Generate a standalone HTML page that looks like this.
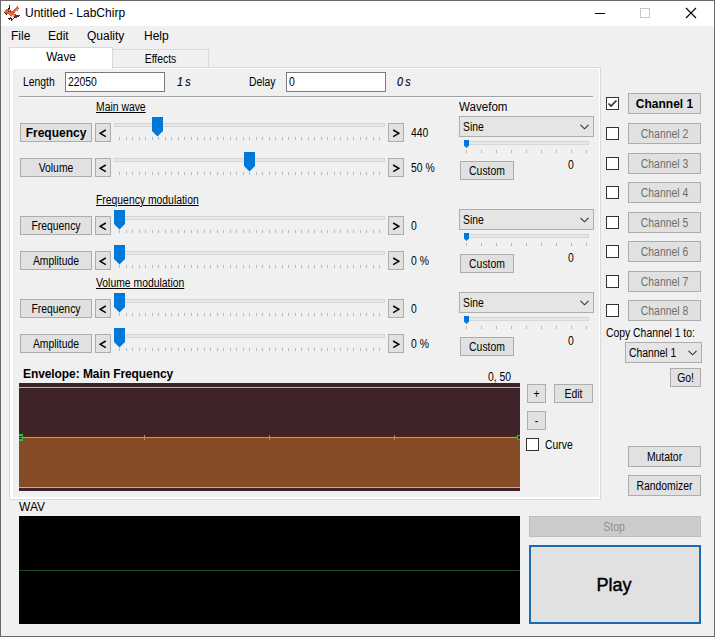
<!DOCTYPE html><html><head><meta charset="utf-8"><style>
*{margin:0;padding:0}
html,body{width:715px;height:637px;overflow:hidden;background:#f0f0f0}
body{position:relative;font-family:"Liberation Sans",sans-serif}
div{position:absolute}
.t{white-space:pre}
</style></head><body>
<div style="left:0px;top:0px;width:715px;height:637px;border:1px solid #6a6a6a;box-sizing:border-box;"></div>
<div style="left:1px;top:1px;width:713px;height:25px;background:#fff;"></div>
<svg style="position:absolute;left:2px;top:3px" width="20" height="20" shape-rendering="crispEdges"><rect x="7" y="2" width="1" height="1" fill="#4a2016"/><rect x="7" y="3" width="1" height="1" fill="#4a2016"/><rect x="15" y="3" width="1" height="1" fill="#b8442a"/><rect x="7" y="4" width="1" height="1" fill="#4a2016"/><rect x="14" y="4" width="1" height="1" fill="#e0653f"/><rect x="15" y="4" width="1" height="1" fill="#e0653f"/><rect x="16" y="4" width="1" height="1" fill="#f4b896"/><rect x="6" y="5" width="1" height="1" fill="#4a2016"/><rect x="7" y="5" width="1" height="1" fill="#4a2016"/><rect x="13" y="5" width="1" height="1" fill="#e0653f"/><rect x="14" y="5" width="1" height="1" fill="#e0653f"/><rect x="15" y="5" width="1" height="1" fill="#e0653f"/><rect x="16" y="5" width="1" height="1" fill="#b8442a"/><rect x="6" y="6" width="1" height="1" fill="#4a2016"/><rect x="4" y="6" width="1" height="1" fill="#e0653f"/><rect x="5" y="6" width="1" height="1" fill="#e0653f"/><rect x="7" y="6" width="1" height="1" fill="#e0653f"/><rect x="12" y="6" width="1" height="1" fill="#e0653f"/><rect x="13" y="6" width="1" height="1" fill="#e0653f"/><rect x="14" y="6" width="1" height="1" fill="#e0653f"/><rect x="15" y="6" width="1" height="1" fill="#f4b896"/><rect x="3" y="7" width="1" height="1" fill="#e0653f"/><rect x="4" y="7" width="1" height="1" fill="#e0653f"/><rect x="5" y="7" width="1" height="1" fill="#e0653f"/><rect x="6" y="7" width="1" height="1" fill="#e0653f"/><rect x="7" y="7" width="1" height="1" fill="#e0653f"/><rect x="8" y="7" width="1" height="1" fill="#e0653f"/><rect x="11" y="7" width="1" height="1" fill="#e0653f"/><rect x="12" y="7" width="1" height="1" fill="#e0653f"/><rect x="13" y="7" width="1" height="1" fill="#e0653f"/><rect x="14" y="7" width="1" height="1" fill="#f4b896"/><rect x="15" y="7" width="1" height="1" fill="#b8442a"/><rect x="2" y="8" width="1" height="1" fill="#f4b896"/><rect x="3" y="8" width="1" height="1" fill="#e0653f"/><rect x="4" y="8" width="1" height="1" fill="#e0653f"/><rect x="5" y="8" width="1" height="1" fill="#e0653f"/><rect x="6" y="8" width="1" height="1" fill="#4a2016"/><rect x="7" y="8" width="1" height="1" fill="#e0653f"/><rect x="8" y="8" width="1" height="1" fill="#4a2016"/><rect x="9" y="8" width="1" height="1" fill="#e0653f"/><rect x="10" y="8" width="1" height="1" fill="#e0653f"/><rect x="11" y="8" width="1" height="1" fill="#e0653f"/><rect x="12" y="8" width="1" height="1" fill="#e0653f"/><rect x="13" y="8" width="1" height="1" fill="#f4b896"/><rect x="2" y="9" width="1" height="1" fill="#4a2016"/><rect x="3" y="9" width="1" height="1" fill="#e0653f"/><rect x="4" y="9" width="1" height="1" fill="#e0653f"/><rect x="5" y="9" width="1" height="1" fill="#e0653f"/><rect x="6" y="9" width="1" height="1" fill="#e0653f"/><rect x="7" y="9" width="1" height="1" fill="#e0653f"/><rect x="8" y="9" width="1" height="1" fill="#e0653f"/><rect x="9" y="9" width="1" height="1" fill="#e0653f"/><rect x="10" y="9" width="1" height="1" fill="#e0653f"/><rect x="11" y="9" width="1" height="1" fill="#e0653f"/><rect x="12" y="9" width="1" height="1" fill="#e0653f"/><rect x="3" y="10" width="1" height="1" fill="#4a2016"/><rect x="4" y="10" width="1" height="1" fill="#4a2016"/><rect x="5" y="10" width="1" height="1" fill="#e0653f"/><rect x="6" y="10" width="1" height="1" fill="#e0653f"/><rect x="7" y="10" width="1" height="1" fill="#e0653f"/><rect x="8" y="10" width="1" height="1" fill="#e0653f"/><rect x="9" y="10" width="1" height="1" fill="#e0653f"/><rect x="10" y="10" width="1" height="1" fill="#e0653f"/><rect x="11" y="10" width="1" height="1" fill="#e0653f"/><rect x="4" y="11" width="1" height="1" fill="#4a2016"/><rect x="7" y="11" width="1" height="1" fill="#e0653f"/><rect x="8" y="11" width="1" height="1" fill="#e0653f"/><rect x="9" y="11" width="1" height="1" fill="#e0653f"/><rect x="10" y="11" width="1" height="1" fill="#e0653f"/><rect x="11" y="11" width="1" height="1" fill="#e0653f"/><rect x="12" y="11" width="1" height="1" fill="#e0653f"/><rect x="13" y="11" width="1" height="1" fill="#b8442a"/><rect x="8" y="12" width="1" height="1" fill="#e0653f"/><rect x="9" y="12" width="1" height="1" fill="#e0653f"/><rect x="10" y="12" width="1" height="1" fill="#f4b896"/><rect x="11" y="12" width="1" height="1" fill="#f4b896"/><rect x="12" y="12" width="1" height="1" fill="#e0653f"/><rect x="13" y="12" width="1" height="1" fill="#6a3024"/><rect x="14" y="12" width="1" height="1" fill="#6a3024"/><rect x="15" y="12" width="1" height="1" fill="#6a3024"/><rect x="16" y="12" width="1" height="1" fill="#6a3024"/><rect x="17" y="12" width="1" height="1" fill="#6a3024"/><rect x="9" y="13" width="1" height="1" fill="#f4b896"/><rect x="10" y="13" width="1" height="1" fill="#f4b896"/><rect x="11" y="13" width="1" height="1" fill="#f4b896"/><rect x="12" y="13" width="1" height="1" fill="#6a3024"/><rect x="13" y="13" width="1" height="1" fill="#6a3024"/><rect x="14" y="13" width="1" height="1" fill="#6a3024"/><rect x="15" y="13" width="1" height="1" fill="#6a3024"/><rect x="16" y="13" width="1" height="1" fill="#4a2016"/><rect x="8" y="14" width="1" height="1" fill="#4a2016"/><rect x="12" y="14" width="1" height="1" fill="#4a2016"/><rect x="13" y="14" width="1" height="1" fill="#6a3024"/><rect x="14" y="14" width="1" height="1" fill="#6a3024"/><rect x="6" y="15" width="1" height="1" fill="#4a2016"/><rect x="7" y="15" width="1" height="1" fill="#4a2016"/><rect x="8" y="15" width="1" height="1" fill="#4a2016"/><rect x="9" y="15" width="1" height="1" fill="#4a2016"/><rect x="11" y="15" width="1" height="1" fill="#4a2016"/><rect x="7" y="16" width="1" height="1" fill="#4a2016"/><rect x="9" y="16" width="1" height="1" fill="#4a2016"/><rect x="10" y="16" width="1" height="1" fill="#4a2016"/><rect x="9" y="17" width="1" height="1" fill="#4a2016"/></svg>
<div class="t" style="left:25px;top:6.84px;font-size:12px;line-height:12px;font-weight:400;color:#000;">Untitled - LabChirp</div>
<div style="left:595px;top:13px;width:10px;height:1px;background:#000;"></div>
<div style="left:640px;top:8px;width:10px;height:10px;border:1px solid #c8c8c8;box-sizing:border-box;"></div>
<svg style="position:absolute;left:685px;top:7px" width="12" height="12" viewBox="0 0 12 12">
<path d="M1 1 L11 11 M11 1 L1 11" stroke="#000" stroke-width="1.1"/></svg>
<div class="t" style="left:11px;top:29.84px;font-size:12px;line-height:12px;font-weight:400;color:#000;">File</div>
<div class="t" style="left:48px;top:29.84px;font-size:12px;line-height:12px;font-weight:400;color:#000;">Edit</div>
<div class="t" style="left:87px;top:29.84px;font-size:12px;line-height:12px;font-weight:400;color:#000;">Quality</div>
<div class="t" style="left:144px;top:29.84px;font-size:12px;line-height:12px;font-weight:400;color:#000;">Help</div>
<div style="left:9px;top:67px;width:592px;height:433px;border:1px solid #d9d9d9;background:#fff;box-sizing:border-box;"></div>
<div style="left:13px;top:69px;width:586px;height:428px;background:#f0f0f0;"></div>
<div style="left:112px;top:49px;width:97px;height:19px;border:1px solid #d9d9d9;background:#f0f0f0;box-sizing:border-box;"></div>
<div style="left:9px;top:47px;width:104px;height:22px;border:1px solid #d9d9d9;border-bottom:none;background:#fff;box-sizing:border-box;"></div>
<div style="left:10px;top:67px;width:102px;height:2px;background:#fff;"></div>
<div class="t" style="left:9px;width:104px;text-align:center;top:50.84px;font-size:12px;line-height:12px;font-weight:400;color:#000;transform:scaleX(0.98);transform-origin:50% 0;">Wave</div>
<div class="t" style="left:112px;width:97px;text-align:center;top:52.84px;font-size:12px;line-height:12px;font-weight:400;color:#000;transform:scaleX(0.865);transform-origin:50% 0;">Effects</div>
<div class="t" style="left:23px;top:75.84px;font-size:12px;line-height:12px;font-weight:400;color:#000;transform:scaleX(0.865);transform-origin:0 0;">Length</div>
<div style="left:65px;top:72px;width:100px;height:20px;border:1px solid #7a7a7a;background:#fff;box-sizing:border-box;"></div>
<div class="t" style="left:68px;top:75.84px;font-size:12px;line-height:12px;font-weight:400;color:#000;transform:scaleX(0.865);transform-origin:0 0;">22050</div>
<div class="t" style="left:176.5px;top:75.84px;font-size:12px;line-height:12px;font-weight:400;color:#000;transform:scaleX(0.9);transform-origin:0 0;font-style:italic;letter-spacing:-0.4px;-webkit-text-stroke:0.15px #000;">1 s</div>
<div class="t" style="left:249px;top:75.84px;font-size:12px;line-height:12px;font-weight:400;color:#000;transform:scaleX(0.865);transform-origin:0 0;">Delay</div>
<div style="left:286px;top:72px;width:100px;height:20px;border:1px solid #7a7a7a;background:#fff;box-sizing:border-box;"></div>
<div class="t" style="left:289px;top:75.84px;font-size:12px;line-height:12px;font-weight:400;color:#000;transform:scaleX(0.865);transform-origin:0 0;">0</div>
<div class="t" style="left:396.5px;top:75.84px;font-size:12px;line-height:12px;font-weight:400;color:#000;transform:scaleX(0.9);transform-origin:0 0;font-style:italic;letter-spacing:-0.4px;-webkit-text-stroke:0.15px #000;">0 s</div>
<div style="left:19px;top:96px;width:574px;height:1px;background:#a0a0a0;"></div>
<div style="left:19px;top:97px;width:574px;height:1px;background:#fff;"></div>
<div class="t" style="left:96px;top:100.84px;font-size:12px;line-height:12px;font-weight:400;color:#000;transform:scaleX(0.865);transform-origin:0 0;text-decoration:underline;">Main wave</div>
<div class="t" style="left:459px;top:100.84px;font-size:12px;line-height:12px;font-weight:400;color:#000;transform:scaleX(0.965);transform-origin:0 0;">Wavefom</div>
<div style="left:20px;top:123px;width:72px;height:19px;background:#e1e1e1;border:1px solid #adadad;box-sizing:border-box;"></div>
<div class="t" style="left:20px;width:72px;text-align:center;top:126.84px;font-size:12px;line-height:12px;font-weight:700;color:#000;">Frequency</div>
<div style="left:95px;top:123px;width:16px;height:19px;background:#e1e1e1;border:1px solid #adadad;box-sizing:border-box;"></div>
<div class="t" style="left:95px;width:16px;text-align:center;top:126.84px;font-size:12px;line-height:12px;font-weight:400;color:#000;transform:scaleX(0.865);transform-origin:50% 0;"></div>
<svg style="position:absolute;left:95px;top:123px" width="16" height="19" viewBox="0 0 16 19"><path d="M10.8 7 L5.2 10.3 L10.8 13.6" stroke="#000" stroke-width="1.5" fill="none"/></svg>
<div style="left:114px;top:123px;width:271px;height:4px;border:1px solid #d6d6d6;background:#e7e7e7;box-sizing:border-box;"></div>
<svg style="position:absolute;left:114px;top:137px" width="271" height="3"><g fill="#b8b8b8"><rect x="5" y="0" width="1" height="3"/><rect x="12" y="0" width="1" height="3"/><rect x="18" y="0" width="1" height="3"/><rect x="25" y="0" width="1" height="3"/><rect x="31" y="0" width="1" height="3"/><rect x="38" y="0" width="1" height="3"/><rect x="44" y="0" width="1" height="3"/><rect x="51" y="0" width="1" height="3"/><rect x="57" y="0" width="1" height="3"/><rect x="64" y="0" width="1" height="3"/><rect x="70" y="0" width="1" height="3"/><rect x="77" y="0" width="1" height="3"/><rect x="83" y="0" width="1" height="3"/><rect x="90" y="0" width="1" height="3"/><rect x="96" y="0" width="1" height="3"/><rect x="103" y="0" width="1" height="3"/><rect x="109" y="0" width="1" height="3"/><rect x="116" y="0" width="1" height="3"/><rect x="122" y="0" width="1" height="3"/><rect x="129" y="0" width="1" height="3"/><rect x="135" y="0" width="1" height="3"/><rect x="142" y="0" width="1" height="3"/><rect x="148" y="0" width="1" height="3"/><rect x="155" y="0" width="1" height="3"/><rect x="161" y="0" width="1" height="3"/><rect x="168" y="0" width="1" height="3"/><rect x="174" y="0" width="1" height="3"/><rect x="181" y="0" width="1" height="3"/><rect x="187" y="0" width="1" height="3"/><rect x="194" y="0" width="1" height="3"/><rect x="200" y="0" width="1" height="3"/><rect x="207" y="0" width="1" height="3"/><rect x="213" y="0" width="1" height="3"/><rect x="220" y="0" width="1" height="3"/><rect x="226" y="0" width="1" height="3"/><rect x="233" y="0" width="1" height="3"/><rect x="239" y="0" width="1" height="3"/><rect x="246" y="0" width="1" height="3"/><rect x="252" y="0" width="1" height="3"/><rect x="259" y="0" width="1" height="3"/><rect x="265" y="0" width="1" height="3"/></g></svg>
<svg style="position:absolute;left:152.0px;top:117px" width="11" height="20" viewBox="0 0 11 20"><path d="M0 0 H11 V14 L5.5 19.5 L0 14 Z" fill="#0078d7"/></svg>
<div style="left:388px;top:123px;width:16px;height:19px;background:#e1e1e1;border:1px solid #adadad;box-sizing:border-box;"></div>
<div class="t" style="left:388px;width:16px;text-align:center;top:126.84px;font-size:12px;line-height:12px;font-weight:400;color:#000;transform:scaleX(0.865);transform-origin:50% 0;"></div>
<svg style="position:absolute;left:388px;top:123px" width="16" height="19" viewBox="0 0 16 19"><path d="M5.2 7 L10.8 10.3 L5.2 13.6" stroke="#000" stroke-width="1.5" fill="none"/></svg>
<div class="t" style="left:411px;top:126.84px;font-size:12px;line-height:12px;font-weight:400;color:#000;transform:scaleX(0.865);transform-origin:0 0;">440</div>
<div style="left:20px;top:158px;width:72px;height:19px;background:#e1e1e1;border:1px solid #adadad;box-sizing:border-box;"></div>
<div class="t" style="left:20px;width:72px;text-align:center;top:161.84px;font-size:12px;line-height:12px;font-weight:400;color:#000;transform:scaleX(0.865);transform-origin:50% 0;">Volume</div>
<div style="left:95px;top:158px;width:16px;height:19px;background:#e1e1e1;border:1px solid #adadad;box-sizing:border-box;"></div>
<div class="t" style="left:95px;width:16px;text-align:center;top:161.84px;font-size:12px;line-height:12px;font-weight:400;color:#000;transform:scaleX(0.865);transform-origin:50% 0;"></div>
<svg style="position:absolute;left:95px;top:158px" width="16" height="19" viewBox="0 0 16 19"><path d="M10.8 7 L5.2 10.3 L10.8 13.6" stroke="#000" stroke-width="1.5" fill="none"/></svg>
<div style="left:114px;top:158px;width:271px;height:4px;border:1px solid #d6d6d6;background:#e7e7e7;box-sizing:border-box;"></div>
<svg style="position:absolute;left:114px;top:172px" width="271" height="3"><g fill="#b8b8b8"><rect x="5" y="0" width="1" height="3"/><rect x="12" y="0" width="1" height="3"/><rect x="18" y="0" width="1" height="3"/><rect x="25" y="0" width="1" height="3"/><rect x="31" y="0" width="1" height="3"/><rect x="38" y="0" width="1" height="3"/><rect x="44" y="0" width="1" height="3"/><rect x="51" y="0" width="1" height="3"/><rect x="57" y="0" width="1" height="3"/><rect x="64" y="0" width="1" height="3"/><rect x="70" y="0" width="1" height="3"/><rect x="77" y="0" width="1" height="3"/><rect x="83" y="0" width="1" height="3"/><rect x="90" y="0" width="1" height="3"/><rect x="96" y="0" width="1" height="3"/><rect x="103" y="0" width="1" height="3"/><rect x="109" y="0" width="1" height="3"/><rect x="116" y="0" width="1" height="3"/><rect x="122" y="0" width="1" height="3"/><rect x="129" y="0" width="1" height="3"/><rect x="135" y="0" width="1" height="3"/><rect x="142" y="0" width="1" height="3"/><rect x="148" y="0" width="1" height="3"/><rect x="155" y="0" width="1" height="3"/><rect x="161" y="0" width="1" height="3"/><rect x="168" y="0" width="1" height="3"/><rect x="174" y="0" width="1" height="3"/><rect x="181" y="0" width="1" height="3"/><rect x="187" y="0" width="1" height="3"/><rect x="194" y="0" width="1" height="3"/><rect x="200" y="0" width="1" height="3"/><rect x="207" y="0" width="1" height="3"/><rect x="213" y="0" width="1" height="3"/><rect x="220" y="0" width="1" height="3"/><rect x="226" y="0" width="1" height="3"/><rect x="233" y="0" width="1" height="3"/><rect x="239" y="0" width="1" height="3"/><rect x="246" y="0" width="1" height="3"/><rect x="252" y="0" width="1" height="3"/><rect x="259" y="0" width="1" height="3"/><rect x="265" y="0" width="1" height="3"/></g></svg>
<svg style="position:absolute;left:244.0px;top:152px" width="11" height="20" viewBox="0 0 11 20"><path d="M0 0 H11 V14 L5.5 19.5 L0 14 Z" fill="#0078d7"/></svg>
<div style="left:388px;top:158px;width:16px;height:19px;background:#e1e1e1;border:1px solid #adadad;box-sizing:border-box;"></div>
<div class="t" style="left:388px;width:16px;text-align:center;top:161.84px;font-size:12px;line-height:12px;font-weight:400;color:#000;transform:scaleX(0.865);transform-origin:50% 0;"></div>
<svg style="position:absolute;left:388px;top:158px" width="16" height="19" viewBox="0 0 16 19"><path d="M5.2 7 L10.8 10.3 L5.2 13.6" stroke="#000" stroke-width="1.5" fill="none"/></svg>
<div class="t" style="left:411px;top:161.84px;font-size:12px;line-height:12px;font-weight:400;color:#000;transform:scaleX(0.865);transform-origin:0 0;">50 %</div>
<div style="left:459px;top:116px;width:135px;height:21px;border:1px solid #adadad;background:#e5e5e5;box-sizing:border-box;"></div>
<div class="t" style="left:463px;top:120.84px;font-size:12px;line-height:12px;font-weight:400;color:#000;transform:scaleX(0.865);transform-origin:0 0;">Sine</div>
<svg style="position:absolute;left:580px;top:124px" width="9" height="6" viewBox="0 0 9 6"><path d="M0.5 0.8 L4.5 4.8 L8.5 0.8" stroke="#333" stroke-width="1.1" fill="none"/></svg>
<div style="left:464px;top:141px;width:125px;height:4px;border:1px solid #d6d6d6;background:#e7e7e7;box-sizing:border-box;"></div>
<svg style="position:absolute;left:464px;top:150px" width="126" height="3"><g fill="#b8b8b8"><rect x="2" y="0" width="1" height="3"/><rect x="17" y="0" width="1" height="3"/><rect x="32" y="0" width="1" height="3"/><rect x="47" y="0" width="1" height="3"/><rect x="62" y="0" width="1" height="3"/><rect x="77" y="0" width="1" height="3"/><rect x="92" y="0" width="1" height="3"/><rect x="107" y="0" width="1" height="3"/><rect x="122" y="0" width="1" height="3"/></g></svg>
<svg style="position:absolute;left:464px;top:140px" width="5" height="8" viewBox="0 0 5 8"><path d="M0 0 H5 V5.5 L2.5 8 L0 5.5 Z" fill="#0078d7"/></svg>
<div style="left:460px;top:161px;width:54px;height:19px;background:#e1e1e1;border:1px solid #adadad;box-sizing:border-box;"></div>
<div class="t" style="left:460px;width:54px;text-align:center;top:164.84px;font-size:12px;line-height:12px;font-weight:400;color:#000;transform:scaleX(0.865);transform-origin:50% 0;">Custom</div>
<div class="t" style="left:568px;top:158.84px;font-size:12px;line-height:12px;font-weight:400;color:#000;transform:scaleX(0.865);transform-origin:0 0;">0</div>
<div class="t" style="left:96px;top:193.84px;font-size:12px;line-height:12px;font-weight:400;color:#000;transform:scaleX(0.865);transform-origin:0 0;text-decoration:underline;">Frequency modulation</div>
<div style="left:20px;top:216px;width:72px;height:19px;background:#e1e1e1;border:1px solid #adadad;box-sizing:border-box;"></div>
<div class="t" style="left:20px;width:72px;text-align:center;top:219.84px;font-size:12px;line-height:12px;font-weight:400;color:#000;transform:scaleX(0.865);transform-origin:50% 0;">Frequency</div>
<div style="left:95px;top:216px;width:16px;height:19px;background:#e1e1e1;border:1px solid #adadad;box-sizing:border-box;"></div>
<div class="t" style="left:95px;width:16px;text-align:center;top:219.84px;font-size:12px;line-height:12px;font-weight:400;color:#000;transform:scaleX(0.865);transform-origin:50% 0;"></div>
<svg style="position:absolute;left:95px;top:216px" width="16" height="19" viewBox="0 0 16 19"><path d="M10.8 7 L5.2 10.3 L10.8 13.6" stroke="#000" stroke-width="1.5" fill="none"/></svg>
<div style="left:114px;top:216px;width:271px;height:4px;border:1px solid #d6d6d6;background:#e7e7e7;box-sizing:border-box;"></div>
<svg style="position:absolute;left:114px;top:230px" width="271" height="3"><g fill="#b8b8b8"><rect x="5" y="0" width="1" height="3"/><rect x="12" y="0" width="1" height="3"/><rect x="18" y="0" width="1" height="3"/><rect x="25" y="0" width="1" height="3"/><rect x="31" y="0" width="1" height="3"/><rect x="38" y="0" width="1" height="3"/><rect x="44" y="0" width="1" height="3"/><rect x="51" y="0" width="1" height="3"/><rect x="57" y="0" width="1" height="3"/><rect x="64" y="0" width="1" height="3"/><rect x="70" y="0" width="1" height="3"/><rect x="77" y="0" width="1" height="3"/><rect x="83" y="0" width="1" height="3"/><rect x="90" y="0" width="1" height="3"/><rect x="96" y="0" width="1" height="3"/><rect x="103" y="0" width="1" height="3"/><rect x="109" y="0" width="1" height="3"/><rect x="116" y="0" width="1" height="3"/><rect x="122" y="0" width="1" height="3"/><rect x="129" y="0" width="1" height="3"/><rect x="135" y="0" width="1" height="3"/><rect x="142" y="0" width="1" height="3"/><rect x="148" y="0" width="1" height="3"/><rect x="155" y="0" width="1" height="3"/><rect x="161" y="0" width="1" height="3"/><rect x="168" y="0" width="1" height="3"/><rect x="174" y="0" width="1" height="3"/><rect x="181" y="0" width="1" height="3"/><rect x="187" y="0" width="1" height="3"/><rect x="194" y="0" width="1" height="3"/><rect x="200" y="0" width="1" height="3"/><rect x="207" y="0" width="1" height="3"/><rect x="213" y="0" width="1" height="3"/><rect x="220" y="0" width="1" height="3"/><rect x="226" y="0" width="1" height="3"/><rect x="233" y="0" width="1" height="3"/><rect x="239" y="0" width="1" height="3"/><rect x="246" y="0" width="1" height="3"/><rect x="252" y="0" width="1" height="3"/><rect x="259" y="0" width="1" height="3"/><rect x="265" y="0" width="1" height="3"/></g></svg>
<svg style="position:absolute;left:114.0px;top:210px" width="11" height="20" viewBox="0 0 11 20"><path d="M0 0 H11 V14 L5.5 19.5 L0 14 Z" fill="#0078d7"/></svg>
<div style="left:388px;top:216px;width:16px;height:19px;background:#e1e1e1;border:1px solid #adadad;box-sizing:border-box;"></div>
<div class="t" style="left:388px;width:16px;text-align:center;top:219.84px;font-size:12px;line-height:12px;font-weight:400;color:#000;transform:scaleX(0.865);transform-origin:50% 0;"></div>
<svg style="position:absolute;left:388px;top:216px" width="16" height="19" viewBox="0 0 16 19"><path d="M5.2 7 L10.8 10.3 L5.2 13.6" stroke="#000" stroke-width="1.5" fill="none"/></svg>
<div class="t" style="left:411px;top:219.84px;font-size:12px;line-height:12px;font-weight:400;color:#000;transform:scaleX(0.865);transform-origin:0 0;">0</div>
<div style="left:20px;top:251px;width:72px;height:19px;background:#e1e1e1;border:1px solid #adadad;box-sizing:border-box;"></div>
<div class="t" style="left:20px;width:72px;text-align:center;top:254.84px;font-size:12px;line-height:12px;font-weight:400;color:#000;transform:scaleX(0.865);transform-origin:50% 0;">Amplitude</div>
<div style="left:95px;top:251px;width:16px;height:19px;background:#e1e1e1;border:1px solid #adadad;box-sizing:border-box;"></div>
<div class="t" style="left:95px;width:16px;text-align:center;top:254.84px;font-size:12px;line-height:12px;font-weight:400;color:#000;transform:scaleX(0.865);transform-origin:50% 0;"></div>
<svg style="position:absolute;left:95px;top:251px" width="16" height="19" viewBox="0 0 16 19"><path d="M10.8 7 L5.2 10.3 L10.8 13.6" stroke="#000" stroke-width="1.5" fill="none"/></svg>
<div style="left:114px;top:251px;width:271px;height:4px;border:1px solid #d6d6d6;background:#e7e7e7;box-sizing:border-box;"></div>
<svg style="position:absolute;left:114px;top:265px" width="271" height="3"><g fill="#b8b8b8"><rect x="5" y="0" width="1" height="3"/><rect x="12" y="0" width="1" height="3"/><rect x="18" y="0" width="1" height="3"/><rect x="25" y="0" width="1" height="3"/><rect x="31" y="0" width="1" height="3"/><rect x="38" y="0" width="1" height="3"/><rect x="44" y="0" width="1" height="3"/><rect x="51" y="0" width="1" height="3"/><rect x="57" y="0" width="1" height="3"/><rect x="64" y="0" width="1" height="3"/><rect x="70" y="0" width="1" height="3"/><rect x="77" y="0" width="1" height="3"/><rect x="83" y="0" width="1" height="3"/><rect x="90" y="0" width="1" height="3"/><rect x="96" y="0" width="1" height="3"/><rect x="103" y="0" width="1" height="3"/><rect x="109" y="0" width="1" height="3"/><rect x="116" y="0" width="1" height="3"/><rect x="122" y="0" width="1" height="3"/><rect x="129" y="0" width="1" height="3"/><rect x="135" y="0" width="1" height="3"/><rect x="142" y="0" width="1" height="3"/><rect x="148" y="0" width="1" height="3"/><rect x="155" y="0" width="1" height="3"/><rect x="161" y="0" width="1" height="3"/><rect x="168" y="0" width="1" height="3"/><rect x="174" y="0" width="1" height="3"/><rect x="181" y="0" width="1" height="3"/><rect x="187" y="0" width="1" height="3"/><rect x="194" y="0" width="1" height="3"/><rect x="200" y="0" width="1" height="3"/><rect x="207" y="0" width="1" height="3"/><rect x="213" y="0" width="1" height="3"/><rect x="220" y="0" width="1" height="3"/><rect x="226" y="0" width="1" height="3"/><rect x="233" y="0" width="1" height="3"/><rect x="239" y="0" width="1" height="3"/><rect x="246" y="0" width="1" height="3"/><rect x="252" y="0" width="1" height="3"/><rect x="259" y="0" width="1" height="3"/><rect x="265" y="0" width="1" height="3"/></g></svg>
<svg style="position:absolute;left:114.0px;top:245px" width="11" height="20" viewBox="0 0 11 20"><path d="M0 0 H11 V14 L5.5 19.5 L0 14 Z" fill="#0078d7"/></svg>
<div style="left:388px;top:251px;width:16px;height:19px;background:#e1e1e1;border:1px solid #adadad;box-sizing:border-box;"></div>
<div class="t" style="left:388px;width:16px;text-align:center;top:254.84px;font-size:12px;line-height:12px;font-weight:400;color:#000;transform:scaleX(0.865);transform-origin:50% 0;"></div>
<svg style="position:absolute;left:388px;top:251px" width="16" height="19" viewBox="0 0 16 19"><path d="M5.2 7 L10.8 10.3 L5.2 13.6" stroke="#000" stroke-width="1.5" fill="none"/></svg>
<div class="t" style="left:411px;top:254.84px;font-size:12px;line-height:12px;font-weight:400;color:#000;transform:scaleX(0.865);transform-origin:0 0;">0 %</div>
<div style="left:459px;top:209px;width:135px;height:21px;border:1px solid #adadad;background:#e5e5e5;box-sizing:border-box;"></div>
<div class="t" style="left:463px;top:213.84px;font-size:12px;line-height:12px;font-weight:400;color:#000;transform:scaleX(0.865);transform-origin:0 0;">Sine</div>
<svg style="position:absolute;left:580px;top:217px" width="9" height="6" viewBox="0 0 9 6"><path d="M0.5 0.8 L4.5 4.8 L8.5 0.8" stroke="#333" stroke-width="1.1" fill="none"/></svg>
<div style="left:464px;top:234px;width:125px;height:4px;border:1px solid #d6d6d6;background:#e7e7e7;box-sizing:border-box;"></div>
<svg style="position:absolute;left:464px;top:243px" width="126" height="3"><g fill="#b8b8b8"><rect x="2" y="0" width="1" height="3"/><rect x="17" y="0" width="1" height="3"/><rect x="32" y="0" width="1" height="3"/><rect x="47" y="0" width="1" height="3"/><rect x="62" y="0" width="1" height="3"/><rect x="77" y="0" width="1" height="3"/><rect x="92" y="0" width="1" height="3"/><rect x="107" y="0" width="1" height="3"/><rect x="122" y="0" width="1" height="3"/></g></svg>
<svg style="position:absolute;left:464px;top:233px" width="5" height="8" viewBox="0 0 5 8"><path d="M0 0 H5 V5.5 L2.5 8 L0 5.5 Z" fill="#0078d7"/></svg>
<div style="left:460px;top:254px;width:54px;height:19px;background:#e1e1e1;border:1px solid #adadad;box-sizing:border-box;"></div>
<div class="t" style="left:460px;width:54px;text-align:center;top:257.84px;font-size:12px;line-height:12px;font-weight:400;color:#000;transform:scaleX(0.865);transform-origin:50% 0;">Custom</div>
<div class="t" style="left:568px;top:251.84px;font-size:12px;line-height:12px;font-weight:400;color:#000;transform:scaleX(0.865);transform-origin:0 0;">0</div>
<div class="t" style="left:96px;top:276.84px;font-size:12px;line-height:12px;font-weight:400;color:#000;transform:scaleX(0.865);transform-origin:0 0;text-decoration:underline;">Volume modulation</div>
<div style="left:20px;top:299px;width:72px;height:19px;background:#e1e1e1;border:1px solid #adadad;box-sizing:border-box;"></div>
<div class="t" style="left:20px;width:72px;text-align:center;top:302.84px;font-size:12px;line-height:12px;font-weight:400;color:#000;transform:scaleX(0.865);transform-origin:50% 0;">Frequency</div>
<div style="left:95px;top:299px;width:16px;height:19px;background:#e1e1e1;border:1px solid #adadad;box-sizing:border-box;"></div>
<div class="t" style="left:95px;width:16px;text-align:center;top:302.84px;font-size:12px;line-height:12px;font-weight:400;color:#000;transform:scaleX(0.865);transform-origin:50% 0;"></div>
<svg style="position:absolute;left:95px;top:299px" width="16" height="19" viewBox="0 0 16 19"><path d="M10.8 7 L5.2 10.3 L10.8 13.6" stroke="#000" stroke-width="1.5" fill="none"/></svg>
<div style="left:114px;top:299px;width:271px;height:4px;border:1px solid #d6d6d6;background:#e7e7e7;box-sizing:border-box;"></div>
<svg style="position:absolute;left:114px;top:313px" width="271" height="3"><g fill="#b8b8b8"><rect x="5" y="0" width="1" height="3"/><rect x="12" y="0" width="1" height="3"/><rect x="18" y="0" width="1" height="3"/><rect x="25" y="0" width="1" height="3"/><rect x="31" y="0" width="1" height="3"/><rect x="38" y="0" width="1" height="3"/><rect x="44" y="0" width="1" height="3"/><rect x="51" y="0" width="1" height="3"/><rect x="57" y="0" width="1" height="3"/><rect x="64" y="0" width="1" height="3"/><rect x="70" y="0" width="1" height="3"/><rect x="77" y="0" width="1" height="3"/><rect x="83" y="0" width="1" height="3"/><rect x="90" y="0" width="1" height="3"/><rect x="96" y="0" width="1" height="3"/><rect x="103" y="0" width="1" height="3"/><rect x="109" y="0" width="1" height="3"/><rect x="116" y="0" width="1" height="3"/><rect x="122" y="0" width="1" height="3"/><rect x="129" y="0" width="1" height="3"/><rect x="135" y="0" width="1" height="3"/><rect x="142" y="0" width="1" height="3"/><rect x="148" y="0" width="1" height="3"/><rect x="155" y="0" width="1" height="3"/><rect x="161" y="0" width="1" height="3"/><rect x="168" y="0" width="1" height="3"/><rect x="174" y="0" width="1" height="3"/><rect x="181" y="0" width="1" height="3"/><rect x="187" y="0" width="1" height="3"/><rect x="194" y="0" width="1" height="3"/><rect x="200" y="0" width="1" height="3"/><rect x="207" y="0" width="1" height="3"/><rect x="213" y="0" width="1" height="3"/><rect x="220" y="0" width="1" height="3"/><rect x="226" y="0" width="1" height="3"/><rect x="233" y="0" width="1" height="3"/><rect x="239" y="0" width="1" height="3"/><rect x="246" y="0" width="1" height="3"/><rect x="252" y="0" width="1" height="3"/><rect x="259" y="0" width="1" height="3"/><rect x="265" y="0" width="1" height="3"/></g></svg>
<svg style="position:absolute;left:114.0px;top:293px" width="11" height="20" viewBox="0 0 11 20"><path d="M0 0 H11 V14 L5.5 19.5 L0 14 Z" fill="#0078d7"/></svg>
<div style="left:388px;top:299px;width:16px;height:19px;background:#e1e1e1;border:1px solid #adadad;box-sizing:border-box;"></div>
<div class="t" style="left:388px;width:16px;text-align:center;top:302.84px;font-size:12px;line-height:12px;font-weight:400;color:#000;transform:scaleX(0.865);transform-origin:50% 0;"></div>
<svg style="position:absolute;left:388px;top:299px" width="16" height="19" viewBox="0 0 16 19"><path d="M5.2 7 L10.8 10.3 L5.2 13.6" stroke="#000" stroke-width="1.5" fill="none"/></svg>
<div class="t" style="left:411px;top:302.84px;font-size:12px;line-height:12px;font-weight:400;color:#000;transform:scaleX(0.865);transform-origin:0 0;">0</div>
<div style="left:20px;top:334px;width:72px;height:19px;background:#e1e1e1;border:1px solid #adadad;box-sizing:border-box;"></div>
<div class="t" style="left:20px;width:72px;text-align:center;top:337.84px;font-size:12px;line-height:12px;font-weight:400;color:#000;transform:scaleX(0.865);transform-origin:50% 0;">Amplitude</div>
<div style="left:95px;top:334px;width:16px;height:19px;background:#e1e1e1;border:1px solid #adadad;box-sizing:border-box;"></div>
<div class="t" style="left:95px;width:16px;text-align:center;top:337.84px;font-size:12px;line-height:12px;font-weight:400;color:#000;transform:scaleX(0.865);transform-origin:50% 0;"></div>
<svg style="position:absolute;left:95px;top:334px" width="16" height="19" viewBox="0 0 16 19"><path d="M10.8 7 L5.2 10.3 L10.8 13.6" stroke="#000" stroke-width="1.5" fill="none"/></svg>
<div style="left:114px;top:334px;width:271px;height:4px;border:1px solid #d6d6d6;background:#e7e7e7;box-sizing:border-box;"></div>
<svg style="position:absolute;left:114px;top:348px" width="271" height="3"><g fill="#b8b8b8"><rect x="5" y="0" width="1" height="3"/><rect x="12" y="0" width="1" height="3"/><rect x="18" y="0" width="1" height="3"/><rect x="25" y="0" width="1" height="3"/><rect x="31" y="0" width="1" height="3"/><rect x="38" y="0" width="1" height="3"/><rect x="44" y="0" width="1" height="3"/><rect x="51" y="0" width="1" height="3"/><rect x="57" y="0" width="1" height="3"/><rect x="64" y="0" width="1" height="3"/><rect x="70" y="0" width="1" height="3"/><rect x="77" y="0" width="1" height="3"/><rect x="83" y="0" width="1" height="3"/><rect x="90" y="0" width="1" height="3"/><rect x="96" y="0" width="1" height="3"/><rect x="103" y="0" width="1" height="3"/><rect x="109" y="0" width="1" height="3"/><rect x="116" y="0" width="1" height="3"/><rect x="122" y="0" width="1" height="3"/><rect x="129" y="0" width="1" height="3"/><rect x="135" y="0" width="1" height="3"/><rect x="142" y="0" width="1" height="3"/><rect x="148" y="0" width="1" height="3"/><rect x="155" y="0" width="1" height="3"/><rect x="161" y="0" width="1" height="3"/><rect x="168" y="0" width="1" height="3"/><rect x="174" y="0" width="1" height="3"/><rect x="181" y="0" width="1" height="3"/><rect x="187" y="0" width="1" height="3"/><rect x="194" y="0" width="1" height="3"/><rect x="200" y="0" width="1" height="3"/><rect x="207" y="0" width="1" height="3"/><rect x="213" y="0" width="1" height="3"/><rect x="220" y="0" width="1" height="3"/><rect x="226" y="0" width="1" height="3"/><rect x="233" y="0" width="1" height="3"/><rect x="239" y="0" width="1" height="3"/><rect x="246" y="0" width="1" height="3"/><rect x="252" y="0" width="1" height="3"/><rect x="259" y="0" width="1" height="3"/><rect x="265" y="0" width="1" height="3"/></g></svg>
<svg style="position:absolute;left:114.0px;top:328px" width="11" height="20" viewBox="0 0 11 20"><path d="M0 0 H11 V14 L5.5 19.5 L0 14 Z" fill="#0078d7"/></svg>
<div style="left:388px;top:334px;width:16px;height:19px;background:#e1e1e1;border:1px solid #adadad;box-sizing:border-box;"></div>
<div class="t" style="left:388px;width:16px;text-align:center;top:337.84px;font-size:12px;line-height:12px;font-weight:400;color:#000;transform:scaleX(0.865);transform-origin:50% 0;"></div>
<svg style="position:absolute;left:388px;top:334px" width="16" height="19" viewBox="0 0 16 19"><path d="M5.2 7 L10.8 10.3 L5.2 13.6" stroke="#000" stroke-width="1.5" fill="none"/></svg>
<div class="t" style="left:411px;top:337.84px;font-size:12px;line-height:12px;font-weight:400;color:#000;transform:scaleX(0.865);transform-origin:0 0;">0 %</div>
<div style="left:459px;top:292px;width:135px;height:21px;border:1px solid #adadad;background:#e5e5e5;box-sizing:border-box;"></div>
<div class="t" style="left:463px;top:296.84px;font-size:12px;line-height:12px;font-weight:400;color:#000;transform:scaleX(0.865);transform-origin:0 0;">Sine</div>
<svg style="position:absolute;left:580px;top:300px" width="9" height="6" viewBox="0 0 9 6"><path d="M0.5 0.8 L4.5 4.8 L8.5 0.8" stroke="#333" stroke-width="1.1" fill="none"/></svg>
<div style="left:464px;top:317px;width:125px;height:4px;border:1px solid #d6d6d6;background:#e7e7e7;box-sizing:border-box;"></div>
<svg style="position:absolute;left:464px;top:326px" width="126" height="3"><g fill="#b8b8b8"><rect x="2" y="0" width="1" height="3"/><rect x="17" y="0" width="1" height="3"/><rect x="32" y="0" width="1" height="3"/><rect x="47" y="0" width="1" height="3"/><rect x="62" y="0" width="1" height="3"/><rect x="77" y="0" width="1" height="3"/><rect x="92" y="0" width="1" height="3"/><rect x="107" y="0" width="1" height="3"/><rect x="122" y="0" width="1" height="3"/></g></svg>
<svg style="position:absolute;left:464px;top:316px" width="5" height="8" viewBox="0 0 5 8"><path d="M0 0 H5 V5.5 L2.5 8 L0 5.5 Z" fill="#0078d7"/></svg>
<div style="left:460px;top:337px;width:54px;height:19px;background:#e1e1e1;border:1px solid #adadad;box-sizing:border-box;"></div>
<div class="t" style="left:460px;width:54px;text-align:center;top:340.84px;font-size:12px;line-height:12px;font-weight:400;color:#000;transform:scaleX(0.865);transform-origin:50% 0;">Custom</div>
<div class="t" style="left:568px;top:334.84px;font-size:12px;line-height:12px;font-weight:400;color:#000;transform:scaleX(0.865);transform-origin:0 0;">0</div>
<div class="t" style="left:23px;top:367.84px;font-size:12px;line-height:12px;font-weight:700;color:#000;letter-spacing:-0.08px;">Envelope: Main Frequency</div>
<div class="t" style="left:488px;top:370.84px;font-size:12px;line-height:12px;font-weight:400;color:#000;transform:scaleX(0.865);transform-origin:0 0;">0, 50</div>
<div style="left:19px;top:383px;width:501px;height:108px;background:#3e2428;"></div>
<div style="left:19px;top:383px;width:501px;height:4px;background:#38262a;"></div>
<div style="left:19px;top:387px;width:501px;height:1px;background:#c8a8ac;"></div>
<div style="left:19px;top:436px;width:501px;height:1px;background:#5a2000;"></div>
<div style="left:19px;top:437px;width:501px;height:1px;background:#d8925a;"></div>
<div style="left:19px;top:438px;width:501px;height:49px;background:#854b26;"></div>
<div style="left:19px;top:487px;width:501px;height:1px;background:#c8a8ac;"></div>
<div style="left:144px;top:435px;width:1px;height:5px;background:#b88868;"></div>
<div style="left:269px;top:435px;width:1px;height:5px;background:#b88868;"></div>
<div style="left:394px;top:435px;width:1px;height:5px;background:#b88868;"></div>
<div style="left:19px;top:434px;width:4px;height:7px;background:#3cb83c;"></div>
<div style="left:19px;top:436px;width:3px;height:1px;background:#0a3a0a;"></div>
<div style="left:19px;top:438px;width:3px;height:1px;background:#0a3a0a;"></div>
<div style="left:513px;top:436px;width:4px;height:1px;background:#0a5a0a;"></div>
<div style="left:517px;top:435px;width:3px;height:5px;border:1px solid #4cae4c;border-right:none;box-sizing:border-box;background:#2a3a10;"></div>
<div style="left:527px;top:384px;width:19px;height:19px;background:#e1e1e1;border:1px solid #adadad;box-sizing:border-box;"></div>
<div class="t" style="left:527px;width:19px;text-align:center;top:387.84px;font-size:12px;line-height:12px;font-weight:400;color:#000;transform:scaleX(0.865);transform-origin:50% 0;">+</div>
<div style="left:554px;top:384px;width:39px;height:19px;background:#e1e1e1;border:1px solid #adadad;box-sizing:border-box;"></div>
<div class="t" style="left:554px;width:39px;text-align:center;top:387.84px;font-size:12px;line-height:12px;font-weight:400;color:#000;transform:scaleX(0.865);transform-origin:50% 0;">Edit</div>
<div style="left:527px;top:411px;width:19px;height:19px;background:#e1e1e1;border:1px solid #adadad;box-sizing:border-box;"></div>
<div class="t" style="left:527px;width:19px;text-align:center;top:414.84px;font-size:12px;line-height:12px;font-weight:400;color:#000;transform:scaleX(0.865);transform-origin:50% 0;">-</div>
<div style="left:526px;top:438px;width:13px;height:13px;border:1px solid #333;background:#fff;box-sizing:border-box;"></div>
<div class="t" style="left:545px;top:438.84px;font-size:12px;line-height:12px;font-weight:400;color:#000;transform:scaleX(0.865);transform-origin:0 0;">Curve</div>
<div style="left:606px;top:97px;width:13px;height:13px;border:1px solid #333;background:#fff;box-sizing:border-box;"></div>
<div style="left:628px;top:93px;width:73px;height:21px;background:#e1e1e1;border:1px solid #adadad;box-sizing:border-box;"></div>
<div class="t" style="left:628px;width:73px;text-align:center;top:97.84px;font-size:12px;line-height:12px;font-weight:700;color:#000;">Channel 1</div>
<div style="left:606px;top:127px;width:13px;height:13px;border:1px solid #333;background:#fff;box-sizing:border-box;"></div>
<div style="left:628px;top:123px;width:73px;height:21px;background:#e1e1e1;border:1px solid #adadad;box-sizing:border-box;"></div>
<div class="t" style="left:628px;width:73px;text-align:center;top:127.84px;font-size:12px;line-height:12px;font-weight:400;color:#6d6d6d;transform:scaleX(0.865);transform-origin:50% 0;">Channel 2</div>
<div style="left:606px;top:157px;width:13px;height:13px;border:1px solid #333;background:#fff;box-sizing:border-box;"></div>
<div style="left:628px;top:153px;width:73px;height:21px;background:#e1e1e1;border:1px solid #adadad;box-sizing:border-box;"></div>
<div class="t" style="left:628px;width:73px;text-align:center;top:157.84px;font-size:12px;line-height:12px;font-weight:400;color:#6d6d6d;transform:scaleX(0.865);transform-origin:50% 0;">Channel 3</div>
<div style="left:606px;top:186px;width:13px;height:13px;border:1px solid #333;background:#fff;box-sizing:border-box;"></div>
<div style="left:628px;top:182px;width:73px;height:21px;background:#e1e1e1;border:1px solid #adadad;box-sizing:border-box;"></div>
<div class="t" style="left:628px;width:73px;text-align:center;top:186.84px;font-size:12px;line-height:12px;font-weight:400;color:#6d6d6d;transform:scaleX(0.865);transform-origin:50% 0;">Channel 4</div>
<div style="left:606px;top:216px;width:13px;height:13px;border:1px solid #333;background:#fff;box-sizing:border-box;"></div>
<div style="left:628px;top:212px;width:73px;height:21px;background:#e1e1e1;border:1px solid #adadad;box-sizing:border-box;"></div>
<div class="t" style="left:628px;width:73px;text-align:center;top:216.84px;font-size:12px;line-height:12px;font-weight:400;color:#6d6d6d;transform:scaleX(0.865);transform-origin:50% 0;">Channel 5</div>
<div style="left:606px;top:245px;width:13px;height:13px;border:1px solid #333;background:#fff;box-sizing:border-box;"></div>
<div style="left:628px;top:241px;width:73px;height:21px;background:#e1e1e1;border:1px solid #adadad;box-sizing:border-box;"></div>
<div class="t" style="left:628px;width:73px;text-align:center;top:245.84px;font-size:12px;line-height:12px;font-weight:400;color:#6d6d6d;transform:scaleX(0.865);transform-origin:50% 0;">Channel 6</div>
<div style="left:606px;top:275px;width:13px;height:13px;border:1px solid #333;background:#fff;box-sizing:border-box;"></div>
<div style="left:628px;top:271px;width:73px;height:21px;background:#e1e1e1;border:1px solid #adadad;box-sizing:border-box;"></div>
<div class="t" style="left:628px;width:73px;text-align:center;top:275.84px;font-size:12px;line-height:12px;font-weight:400;color:#6d6d6d;transform:scaleX(0.865);transform-origin:50% 0;">Channel 7</div>
<div style="left:606px;top:304px;width:13px;height:13px;border:1px solid #333;background:#fff;box-sizing:border-box;"></div>
<div style="left:628px;top:300px;width:73px;height:21px;background:#e1e1e1;border:1px solid #adadad;box-sizing:border-box;"></div>
<div class="t" style="left:628px;width:73px;text-align:center;top:304.84px;font-size:12px;line-height:12px;font-weight:400;color:#6d6d6d;transform:scaleX(0.865);transform-origin:50% 0;">Channel 8</div>
<svg style="position:absolute;left:606px;top:97px" width="13" height="13" viewBox="0 0 13 13"><path d="M2.5 6.5 L5 9 L10.5 3.5" stroke="#333" stroke-width="1.7" fill="none"/></svg>
<div class="t" style="left:606px;top:326.84px;font-size:12px;line-height:12px;font-weight:400;color:#000;transform:scaleX(0.865);transform-origin:0 0;">Copy Channel 1 to:</div>
<div style="left:625px;top:342px;width:77px;height:21px;border:1px solid #adadad;background:#e5e5e5;box-sizing:border-box;"></div>
<div class="t" style="left:629px;top:346.84px;font-size:12px;line-height:12px;font-weight:400;color:#000;transform:scaleX(0.865);transform-origin:0 0;">Channel 1</div>
<svg style="position:absolute;left:688px;top:350px" width="9" height="6" viewBox="0 0 9 6"><path d="M0.5 0.8 L4.5 4.8 L8.5 0.8" stroke="#333" stroke-width="1.1" fill="none"/></svg>
<div style="left:670px;top:368px;width:31px;height:19px;background:#e1e1e1;border:1px solid #adadad;box-sizing:border-box;"></div>
<div class="t" style="left:670px;width:31px;text-align:center;top:371.84px;font-size:12px;line-height:12px;font-weight:400;color:#000;transform:scaleX(0.865);transform-origin:50% 0;">Go!</div>
<div style="left:628px;top:446px;width:73px;height:21px;background:#e1e1e1;border:1px solid #adadad;box-sizing:border-box;"></div>
<div class="t" style="left:628px;width:73px;text-align:center;top:450.84px;font-size:12px;line-height:12px;font-weight:400;color:#000;transform:scaleX(0.865);transform-origin:50% 0;">Mutator</div>
<div style="left:628px;top:475px;width:73px;height:21px;background:#e1e1e1;border:1px solid #adadad;box-sizing:border-box;"></div>
<div class="t" style="left:628px;width:73px;text-align:center;top:479.84px;font-size:12px;line-height:12px;font-weight:400;color:#000;transform:scaleX(0.865);transform-origin:50% 0;">Randomizer</div>
<div class="t" style="left:19px;top:500.84px;font-size:12px;line-height:12px;font-weight:400;color:#000;transform:scaleX(1.0);transform-origin:0 0;">WAV</div>
<div style="left:19px;top:516px;width:501px;height:108px;background:#000;"></div>
<div style="left:19px;top:570px;width:501px;height:1px;background:#1e4a1e;"></div>
<div style="left:529px;top:516px;width:172px;height:21px;background:#cccccc;border:1px solid #bfbfbf;box-sizing:border-box;"></div>
<div class="t" style="left:528px;width:172px;text-align:center;top:520.84px;font-size:12px;line-height:12px;font-weight:400;color:#8d8d8d;transform:scaleX(0.865);transform-origin:50% 0;">Stop</div>
<div style="left:529px;top:545px;width:172px;height:79px;border:2px solid #1c6ab4;background:#e1e1e1;box-sizing:border-box;"></div>
<div class="t" style="left:528px;width:172px;text-align:center;top:575.76px;font-size:18px;line-height:18px;font-weight:400;color:#000;-webkit-text-stroke:0.45px #000;">Play</div>
</body></html>
